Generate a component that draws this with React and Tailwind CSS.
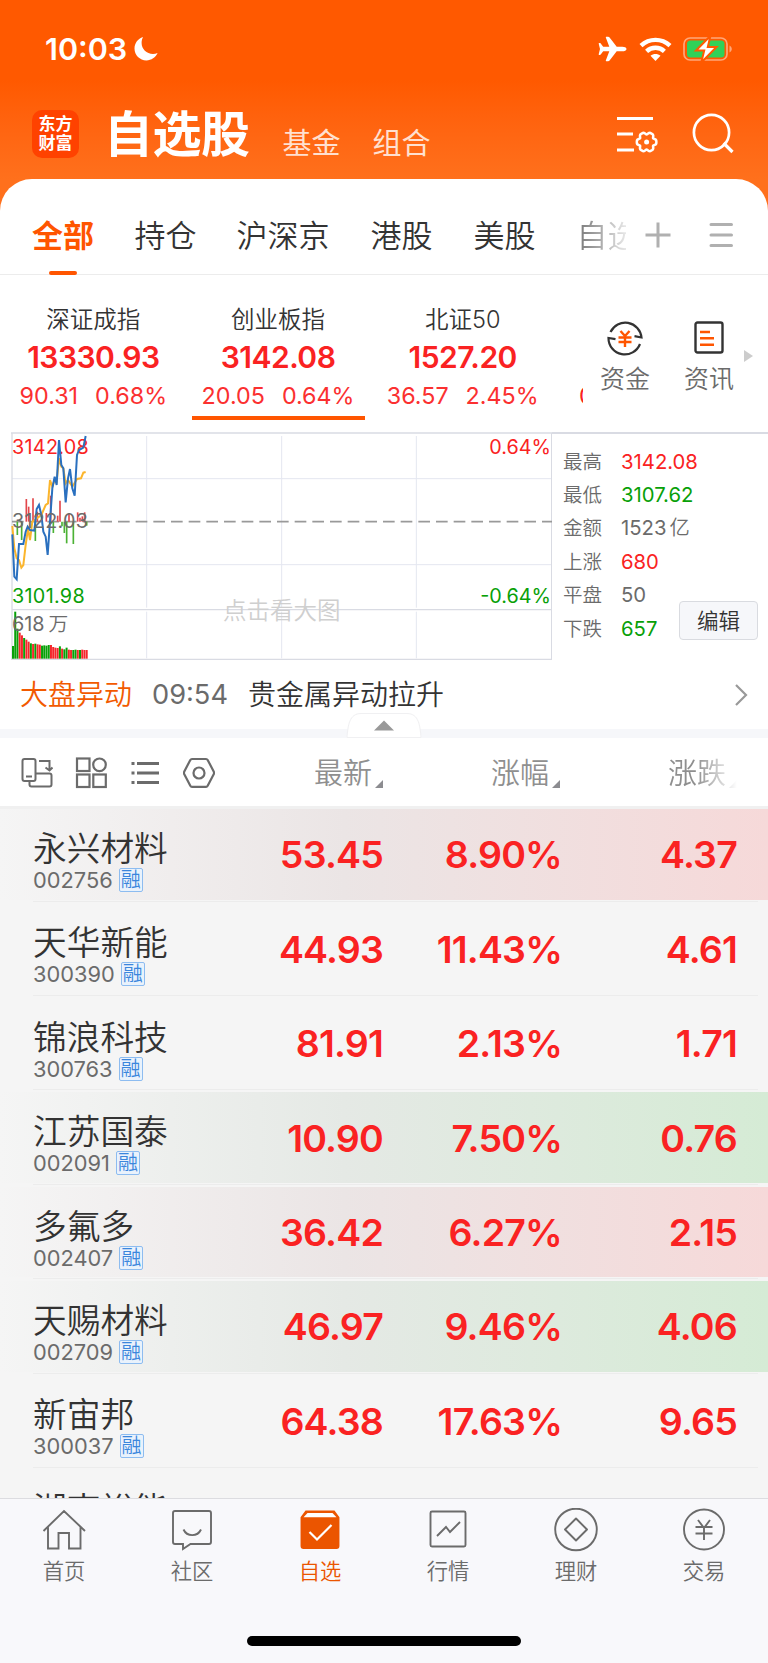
import React from 'react';

const RED = 'text-[#fa2222]';
const GREEN = 'text-[#08a008]';

const groups = [
  { name: '持仓', width: 'w-[102px]' },
  { name: '沪深京', width: 'w-[134px]' },
  { name: '港股', width: 'w-[103px]' },
  { name: '美股', width: 'w-[103px]' }
];

const indices = [
  { name: '深证成指', value: '13330.93', change: '90.31', percent: '0.68%' },
  { name: '创业板指', value: '3142.08', change: '20.05', percent: '0.64%', active: true },
  { name: '北证50', value: '1527.20', change: '36.57', percent: '2.45%' }
];

const marketStats = [
  { label: '最高', value: '3142.08', color: RED },
  { label: '最低', value: '3107.62', color: GREEN },
  { label: '金额', value: '1523', unit: '亿', color: 'text-[#6b6b6b]' },
  { label: '上涨', value: '680', color: RED },
  { label: '平盘', value: '50', color: 'text-[#6b6b6b]' },
  { label: '下跌', value: '657', color: GREEN }
];

const stocks = [
  { name: '永兴材料', code: '002756', price: '53.45', percent: '8.90%', change: '4.37', flash: 'up' },
  { name: '天华新能', code: '300390', price: '44.93', percent: '11.43%', change: '4.61' },
  { name: '锦浪科技', code: '300763', price: '81.91', percent: '2.13%', change: '1.71' },
  { name: '江苏国泰', code: '002091', price: '10.90', percent: '7.50%', change: '0.76', flash: 'down' },
  { name: '多氟多', code: '002407', price: '36.42', percent: '6.27%', change: '2.15', flash: 'up' },
  { name: '天赐材料', code: '002709', price: '46.97', percent: '9.46%', change: '4.06', flash: 'down' },
  { name: '新宙邦', code: '300037', price: '64.38', percent: '17.63%', change: '9.65' }
];

// [height, isUp] for each minute of trading
const volumes = [
  [38, 0], [141, 0], [90, 0], [78, 1], [70, 1], [62, 0], [57, 1], [51, 1], [46, 0], [44, 1], [45, 0],
  [43, 1], [42, 1], [39, 0], [40, 0], [39, 0], [41, 0], [41, 1], [35, 1], [33, 1], [32, 1], [37, 0],
  [30, 1], [28, 0], [33, 0], [27, 1], [26, 1], [26, 0], [27, 0], [26, 1], [26, 0], [27, 1], [26, 1], [26, 1]
];

// [x, height], positive is above the base line
const moves = [
  [52, -40], [65, -55], [79, 68], [86, 45], [99, 70], [106, -58], [112, 30], [126, 12], [139, 26], [152, 78],
  [160, -34], [173, 18], [180, 63], [186, -14], [193, -34], [200, -65], [207, 26], [220, -67], [233, 28],
  [240, 12], [247, 16], [254, 28], [260, -12]
];

// outline of the six-lobed gear
const gearPoints = Array.from({ length: 72 }, (_, step) => {
  const angle = (step * Math.PI) / 36;
  const radius = 9 + 1.1 * Math.cos(angle * 6) - 0.35 * Math.cos(angle * 12);
  return `${(30.6 + radius * Math.cos(angle)).toFixed(2)},${(28 + radius * Math.sin(angle)).toFixed(2)}`;
}).join(' ');

function StatusBar() {
  return (
    <div className="flex h-[98px] items-center pl-[45px] pr-[35px] text-white">
      <span className="text-[30.500px] font-[560] leading-[38px]">10:03</span>
      <svg className="ml-[6px] size-[26px]" viewBox="0 0 26 26" fill="currentColor">
        <path d="M10 1C5 2.600 1.500 7.200 1.500 12.500c0 6.600 5.300 11.900 11.900 11.900 5 0 9.300-3 11.200-7.400-1.500.600-3 .900-4.600.900C13.500 17.900 8.600 13 8.600 7c0-2.200.500-4.200 1.400-6z" />
      </svg>
      <svg className="ml-auto h-[26px] w-[29px]" viewBox="0 0 29 26" fill="currentColor">
        <path d="M28.500 13c0-1.500-2-2.300-4.200-2.300h-5.600L11.600 1.500C11.200 1 10.700.700 10.100.700H8.300c-.400 0-.600.400-.500.800l3.500 9.200H5.200L2.700 7.400c-.200-.300-.500-.400-.800-.400h-.700c-.400 0-.6.300-.5.700L2 13 .7 18.300c-.1.400.1.700.5.700h.7c.3 0 .6-.1.800-.4l2.500-3.300h6.100l-3.500 9.200c-.1.400.1.800.5.800h1.800c.600 0 1.100-.300 1.500-.800l7.100-9.200h5.600c2.200 0 4.200-.800 4.200-2.300z" />
      </svg>
      <svg className="ml-[12px] h-[25px] w-[33px]" viewBox="0 0 33 25" fill="none" stroke="currentColor" strokeWidth="4.400">
        <path d="M2 8.600c8.300-7.600 20.700-7.600 29 0" />
        <path d="M7.600 14.300c5-4.700 12.800-4.700 17.800 0" />
        <path d="M16.500 24l-5-5.200c2.900-2.500 7.100-2.500 10 0z" fill="currentColor" stroke="none" />
      </svg>
      <svg className="ml-[11px] h-[26px] w-[50px]" viewBox="0 0 50 26" fill="none">
        <rect x="1" y="2" width="43" height="22" rx="6" stroke="#ffa678" strokeWidth="1.700" />
        <path d="M46.500 9.500c1.500 1 2.300 2 2.300 3.500s-.8 2.500-2.300 3.500z" fill="#ffa678" />
        <rect x="4" y="4.600" width="37.500" height="16.800" rx="3.500" fill="#30d158" />
        <path d="M27.500-.3L13 14.500h8.200L18.300 26.500 33.500 11h-8.700z" fill="#fff" stroke="#ff5900" strokeWidth="2" />
      </svg>
    </div>
  );
}

function Header() {
  return (
    <div className="flex h-[81px] items-start pl-[32px] pr-[33px] text-white">
      <div className="mt-[12px] flex h-[48px] w-[47px] flex-col items-center justify-center rounded-[10px] bg-[#ff4200] text-[17px] font-bold leading-[19px]">
        <span>东方</span>
        <span>财富</span>
      </div>
      <h1 className="ml-[25px] mt-[7px] text-[49px] font-bold leading-[60px] tracking-[-0.500px]">自选股</h1>
      <span className="ml-[33px] mt-[26px] text-[29px] leading-[40px] text-[#ffe0d0]">基金</span>
      <span className="ml-[32px] mt-[26px] text-[29px] leading-[40px] text-[#ffe0d0]">组合</span>
      <svg className="ml-auto mt-[16px] h-[40px] w-[43px]" viewBox="0 0 43 40" fill="none" stroke="currentColor" strokeWidth="2.800">
        <path d="M0 4.500h36M0 20h16M0 36h17" />
        <polygon points={gearPoints} transform="translate(-1)" strokeWidth="2.500" />
        <circle cx="29.600" cy="28" r="2.500" fill="currentColor" stroke="none" />
      </svg>
      <svg className="ml-[32px] mr-[1px] mt-[15px] size-[42px]" viewBox="0 0 42 42" fill="none" stroke="currentColor" strokeWidth="2.700">
        <circle cx="19.500" cy="19.500" r="17.600" />
        <path d="M31.500 30l9 9" strokeWidth="3.200" />
      </svg>
    </div>
  );
}

function GroupTabs() {
  return (
    <div className="flex h-[96px] items-start border-b border-[#ececec] pl-[32px] text-[31px] font-[350] leading-[40px] text-[#333]">
      <div className="flex h-[96px] w-[102.500px] shrink-0 flex-col pt-[37px] font-bold text-[#ff5500]">
        全部
        <span className="ml-[17px] mt-[15px] h-[4px] w-[28px] rounded-full bg-[#ff5500]" />
      </div>
      {groups.map((group) => (
        <span key={group.name} className={`mt-[37px] shrink-0 ${group.width}`}>{group.name}</span>
      ))}
      <span className="mt-[37px] w-[49px] shrink-0 overflow-hidden whitespace-nowrap bg-linear-to-r from-[#777] to-[#e8e8e8] bg-clip-text text-transparent">自选</span>
      <svg className="ml-[19px] mt-[43px] h-[26px] w-[88px] shrink-0" viewBox="0 0 88 26" fill="none" stroke="#b0b0b0" strokeWidth="3">
        <path d="M.5 13h25M13 .5v25" />
        <path d="M66 2.500h20.500M66 13h20.500M66 23.500h20.500" strokeLinecap="round" />
      </svg>
    </div>
  );
}

function IndexStrip() {
  return (
    <div className="flex h-[157px]">
      <div className="flex w-[583px] overflow-hidden pl-px">
        {indices.map((item) => (
          <div key={item.name} className="flex w-[184.700px] shrink-0 flex-col items-center pt-[30px]">
            <span className="text-[23.500px] font-[350] leading-[30px] text-[#333]">{item.name}</span>
            <span className={`mt-[7px] text-[30px] font-[560] leading-[30px] tracking-[-0.500px] ${RED}`}>{item.value}</span>
            <span className="mt-[9px] flex gap-[17px] text-[23.300px] leading-[30px] text-[#fb3030]">
              <span>{item.change}</span>
              <span>{item.percent}</span>
            </span>
            {item.active ? <span className="mt-[5px] h-[4px] w-[173px] bg-[#ff5500]" /> : null}
          </div>
        ))}
        <span className="ml-[24px] mt-[106px] text-[23.500px] leading-[30px] text-[#fa2222]">0</span>
      </div>
      <div className="flex w-[84px] flex-col items-center pt-[45px]">
        <svg className="h-[36px] w-[36px]" viewBox="0 0 36 36" fill="none" stroke="#333" strokeWidth="2.200">
          <path d="M3.500 12A16.300 16.300 0 0 1 34.500 17.500l-7-1.300M33 24A16.300 16.300 0 0 1 1.500 18l7 1.200" />
          <path d="M13.500 11l4.500 5 4.500-5M11.500 17.500h13M11.500 22h13M18 16v11" stroke="#ff5500" strokeWidth="2.400" />
        </svg>
        <span className="mt-[6px] text-[25px] font-[350] leading-[34px] text-[#6b6b6b]">资金</span>
      </div>
      <div className="flex w-[84px] flex-col items-center pt-[45px]">
        <svg className="h-[36px] w-[30px]" viewBox="0 0 30 36" fill="none" stroke="#333" strokeWidth="2.400">
          <rect x="1.500" y="2.500" width="27" height="30" rx="2" />
          <path d="M6 12h10M6 18.300h14M6 24.700h14" stroke="#ff5500" />
        </svg>
        <span className="mt-[6px] text-[25px] font-[350] leading-[34px] text-[#6b6b6b]">资讯</span>
      </div>
      <span className="ml-[-7px] mt-[75px] size-0 border-y-[6px] border-l-[9px] border-y-transparent border-l-[#ccc]" />
    </div>
  );
}

function MinuteChart() {
  return (
    <div className="relative h-[228px] w-[541px] shrink-0 text-[19.800px] leading-[24px]">
      <span className={`absolute left-px top-[3px] tracking-[0.300px] ${RED}`}>3142.08</span>
      {/* three units per pixel */}
      <svg className="relative block h-[228px] w-[541px]" viewBox="33 21 1623 684" fill="none">
        <g stroke="#e4e7f0" strokeWidth="3">
          <path d="M36 161h1620M36 419h1620" />
          <path d="M440 33v515M440 560v140M845 33v515M845 560v140M1249 33v515M1249 560v140" />
        </g>
        <path d="M33 24h1623M36 24v680M1655 24v680M36 554h1620M33 703h1623" stroke="#d9dbe3" strokeWidth="4" />
        <path d="M36 290h1620" stroke="#999" strokeWidth="5" strokeDasharray="35 18" />
        {moves.map(([x, height]) => (
          <path key={x} d={`M${x} 290v${-height}`} stroke={height > 0 ? '#e2474b' : '#4cb235'} strokeWidth="5" />
        ))}
        {volumes.map(([height, isUp], index) => (
          <path key={index} d={`M${39 + index * 6.7} 701v${-height}`} stroke={isUp ? '#f5262b' : '#08a008'} strokeWidth="6" />
        ))}
        <polyline
          points="37,303 43,370 50,400 57,405 64,428 70,420 77,360 84,310 90,345 97,290 110,280 124,270 137,240 144,235 150,165 157,185 164,165 170,170 177,100 184,125 190,130 197,175 204,165 217,185 231,162 243,160 250,143 257,141"
          stroke="#fbb52c"
          strokeWidth="6"
        />
        <polyline
          points="37,328 43,455 50,463 57,357 70,357 77,320 83,305 90,315 103,317 110,252 117,240 124,270 130,320 137,335 143,390 150,290 157,190 164,155 170,180 177,45 184,120 190,130 197,232 204,160 210,132 217,190 224,212 231,90 237,75 250,68 257,33"
          stroke="#2a70bf"
          strokeWidth="6"
        />
      </svg>
      <span className={`absolute right-[1px] top-[3px] ${RED}`}>0.64%</span>
      <span className="absolute left-px top-[77px] tracking-[0.300px] text-[#6b6b6b]">3122.03</span>
      <span className={`absolute left-px top-[152px] tracking-[0.300px] ${GREEN}`}>3101.98</span>
      <span className={`absolute right-[1px] top-[152px] ${GREEN}`}>-0.64%</span>
      <span className="absolute left-px top-[180px] text-[#6b6b6b]">618<span className="ml-[4px] font-[350]">万</span></span>
      <span className="absolute left-[212px] top-[164px] text-[23.500px] font-[350] leading-[30px] text-[#cfcfcf]">点击看大图</span>
    </div>
  );
}

function MarketPanel() {
  return (
    <div className="flex pl-[11px]">
      <MinuteChart />
      <div className="flex grow border-t-2 border-[#d9dbe3] pl-[11px] pt-[11px]">
        <div className="w-[116px] shrink-0">
          {marketStats.map((stat) => (
            <div key={stat.label} className="flex h-[33.400px] items-center whitespace-nowrap leading-[30px]">
              <span className="w-[58px] shrink-0 text-[19.500px] font-[350] text-[#6b6b6b]">{stat.label}</span>
              <span className={`text-[20.300px] ${stat.color}`}>
                {stat.value}
                {stat.unit ? <span className="ml-[3px] font-[350]">{stat.unit}</span> : null}
              </span>
            </div>
          ))}
        </div>
        <button className="mt-[156px] h-[39px] w-[79px] rounded-[4px] border border-[#d9dbe0] bg-[#f6f7fa] text-[21.500px] font-[350] leading-[36px] text-[#333]">编辑</button>
      </div>
    </div>
  );
}

function NewsRow() {
  return (
    <div className="flex h-[69px] items-center pl-[20px] pr-[20px] text-[28px] font-[350] leading-[36px]">
      <span className="text-[#f25a00]">大盘异动</span>
      <span className="ml-[20px] text-[27.200px] font-normal text-[#6b6b6b]">09:54</span>
      <span className="ml-[20px] text-[#333]">贵金属异动拉升</span>
      <svg className="ml-auto h-[22px] w-[13px]" viewBox="0 0 13 22" fill="none" stroke="#999" strokeWidth="2.200">
        <path d="M1 1l10 10L1 21" />
      </svg>
    </div>
  );
}

function CollapseBand() {
  return (
    <div className="relative h-[9px] bg-[#f6f7fa]">
      <svg className="absolute bottom-0 left-[346px] h-[26px] w-[76px]" viewBox="0 0 76 26">
        <path d="M1 25.500C2 14 3 1.500 15 1.500h46c12 0 13 12.500 14 24z" fill="#fff" stroke="#f0f0f2" />
        <path d="M38 8.500l10 10H28z" fill="#999" />
      </svg>
    </div>
  );
}

function SortMark() {
  return (
    <svg className="mb-[4px] ml-[3px] h-[8px] w-[8px]" viewBox="0 0 8 8" fill="#8c8c90">
      <path d="M8 0v8H0z" />
    </svg>
  );
}

function ListHeader() {
  return (
    <div className="flex h-[71px] items-center border-b-[3px] border-[#f0f0f0] pl-[21px] pt-[3px] text-[29px] font-[350] leading-[36px] text-[#8f8f8f]">
      <div className="mb-[2px] flex w-[293px] shrink-0 items-center text-[#6b6b6b]">
        <svg className="size-[32px]" viewBox="0 0 32 32" fill="none" stroke="currentColor" strokeWidth="2">
          <rect x="1.500" y="2" width="13" height="22" rx="2" />
          <path d="M5 19.500h6M18 4h10.500v9M24.500 10.500l4 3 3-3M14.500 16.500h14a2 2 0 0 1 2 2v9a2 2 0 0 1-2 2h-18a2 2 0 0 1-2-2v-3" />
        </svg>
        <svg className="ml-[22px] size-[32px]" viewBox="0 0 32 32" fill="none" stroke="currentColor" strokeWidth="2.200">
          <rect x="2" y="1.500" width="12.500" height="12.500" />
          <circle cx="24.500" cy="7.800" r="6.300" />
          <rect x="2" y="17.500" width="12.500" height="12.500" />
          <rect x="18.300" y="17.500" width="12.500" height="12.500" />
        </svg>
        <svg className="ml-[24px] h-[32px] w-[28px]" viewBox="0 0 28 32" fill="none" stroke="currentColor" strokeWidth="2.800">
          <path d="M6 6.500h22M6 16h22M6 25.500h22" />
          <path d="M.5 6.500h3M.5 16h3M.5 25.500h3" />
        </svg>
        <svg className="ml-[24px] size-[32px]" viewBox="0 0 32 32" fill="none" stroke="currentColor" strokeWidth="2.200">
          <path d="M8.500 2h14a2 2 0 0 1 1.700 1l6 11.500a3 3 0 0 1 0 2.800l-6 11.500a2 2 0 0 1-1.700 1h-14a2 2 0 0 1-1.700-1l-6-11.500a3 3 0 0 1 0-2.800L6.800 3a2 2 0 0 1 1.700-1z" transform="translate(.5)" />
          <circle cx="16" cy="16" r="5.500" />
        </svg>
      </div>
      <span className="flex w-[177px] shrink-0 items-end">最新<SortMark /></span>
      <span className="flex w-[177px] shrink-0 items-end">涨幅<SortMark /></span>
      <span className="flex items-end mask-r-from-40% mask-r-to-100%">涨跌<SortMark /></span>
    </div>
  );
}

function flashStyle(flash) {
  if (flash === 'up') return 'bg-linear-to-r from-[#f5f5f5] via-[#ebe5e5] via-45% to-[#f6d9d9]';
  if (flash === 'down') return 'bg-linear-to-r from-[#f5f5f5] via-[#e5e9e5] via-45% to-[#d5ebd5]';
  return '';
}

function StockRow({ stock }) {
  return (
    <div className="h-[94.450px] shrink-0">
      <div className={`flex h-[90.500px] items-center pl-[33px] ${flashStyle(stock.flash)}`}>
        <div className="w-[180px] shrink-0 pt-[15px]">
          <p className="text-[33.700px] font-[350] leading-[36px] text-[#333]">{stock.name}</p>
          <p className="flex h-[26px] items-center text-[21.800px] leading-[26px] text-[#6b6b6b]">
            {stock.code}
            <span className="ml-[6px] flex size-[24px] items-center justify-center rounded-[2px] border border-[#8dbcf0] bg-[#e9f2fc] text-[20px] font-[350] leading-[22px] text-[#3b86dc]">融</span>
          </p>
        </div>
        <div className={`flex pt-[2px] text-right text-[37.500px] font-[560] leading-[48px] tracking-[-0.800px] ${RED}`}>
          <span className="w-[170px]">{stock.price}</span>
          <span className="w-[179px]">{stock.percent}</span>
          <span className="w-[175px]">{stock.change}</span>
        </div>
      </div>
      <div className="ml-[33px] mr-[10px] mt-px h-px bg-[#ececec]" />
    </div>
  );
}

const tabIcons = {
  home: (
    <path d="M1.500 23L22 3l21 20M6 19v21.500h10.500V25H27v15.500h11.500V19" />
  ),
  community: (
    <path d="M5 3h34a2 2 0 0 1 2 2v29a2 2 0 0 1-2 2H20.500L13 41v-5H5a2 2 0 0 1-2-2V5a2 2 0 0 1 2-2zM13.500 21.500c3.500 7.500 14 7.500 17.500 0" />
  ),
  quotes: (
    <>
      <rect x="4.500" y="3.500" width="35" height="35" rx="1.500" />
      <path d="M11 28l9-9 4 5 10-10" />
    </>
  ),
  wealth: (
    <>
      <circle cx="22" cy="21.500" r="20.800" />
      <path d="M22 10.500L33 21.500 22 32.500 11 21.500z" strokeLinejoin="round" />
    </>
  ),
  trade: (
    <>
      <circle cx="22" cy="21.500" r="20" />
      <path d="M16 12l6 8 6-8M13.500 19h17M13.500 25.500h17M22 19v13" />
    </>
  )
};

const tabs = [
  { icon: 'home', label: '首页' },
  { icon: 'community', label: '社区' },
  { icon: 'watchlist', label: '自选', active: true },
  { icon: 'quotes', label: '行情' },
  { icon: 'wealth', label: '理财' },
  { icon: 'trade', label: '交易' }
];

function TabBar() {
  return (
    <nav className="flex h-[165px] shrink-0 flex-col items-center border-t border-[#dcdce0] bg-[#f8f8fb]">
      <div className="flex w-full">
        {tabs.map((tab) => (
          <div key={tab.label} className={`flex w-[128px] flex-col items-center pt-[9px] text-[21.300px] font-[350] leading-[28px] ${tab.active ? 'text-[#eb5500]' : 'text-[#6b6b6b]'}`}>
            <svg className="h-[44px] w-[44px]" viewBox="0 0 44 44" fill="none" stroke="currentColor" strokeWidth="1.900">
              {tab.active ? (
                <>
                  <path d="M8 3.500h28l4.500 6V38a2 2 0 0 1-2 2h-33a2 2 0 0 1-2-2V9.500z" fill="currentColor" />
                  <path d="M9.500 5h25l4 4.300H5.500z" fill="#fff" stroke="none" />
                  <path d="M11.500 24l7.500 7.500L33.500 17" stroke="#fff" strokeWidth="2.200" />
                </>
              ) : tabIcons[tab.icon]}
            </svg>
            <span className="mt-[5px]">{tab.label}</span>
          </div>
        ))}
      </div>
      <div className="mb-[17px] mt-auto h-[10px] w-[274px] rounded-full bg-black" />
    </nav>
  );
}

function App() {
  return (
    <div className="flex h-[1663px] w-[768px] flex-col overflow-hidden bg-white font-['Inter','Noto_Sans_CJK_SC',sans-serif]">
      <div className="h-[211px] shrink-0 bg-linear-to-b from-[#ff5900] from-38% to-[#ff701c] to-85%">
        <StatusBar />
        <Header />
      </div>
      <div className="-mt-[32px] shrink-0 rounded-t-[32px] bg-white">
        <GroupTabs />
        <IndexStrip />
        <MarketPanel />
        <NewsRow />
        <CollapseBand />
        <ListHeader />
      </div>
      <div className="flex h-0 grow flex-col overflow-hidden bg-[#f5f5f5]">
        {stocks.map((stock) => (
          <StockRow key={stock.code} stock={stock} />
        ))}
        <p className="pl-[33px] pt-[22px] text-[33.700px] font-[350] leading-[36px] text-[#333]">湖南裕能</p>
      </div>
      <TabBar />
    </div>
  );
}

export default App;
